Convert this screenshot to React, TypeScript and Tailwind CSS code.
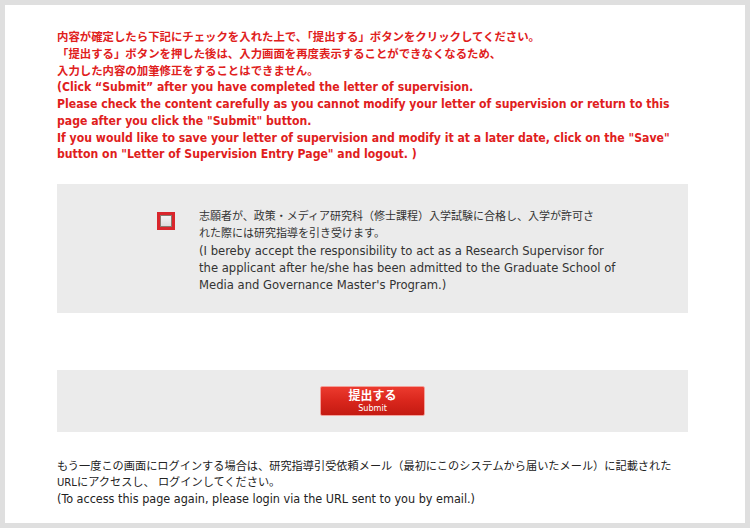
import React from "react";

const ff = '"DejaVu Sans Condensed", "Noto Sans CJK JP", sans-serif';

export default function App() {
  return (
    <div className="min-h-[528px] w-[750px] bg-[#dfdfdf] p-[5px]" style={{ fontFamily: ff }}>
      <div className="h-[518px] w-[740px] bg-white pl-[52px] pr-[40px] pt-[24px]">
        <div className="text-[12.15px] font-bold leading-[16.75px] text-[#e0201c]">
          <div className="text-[11.4px]">内容が確定したら下記にチェックを入れた上で、「提出する」ボタンをクリックしてください。</div>
          <div className="text-[11.4px]">「提出する」ボタンを押した後は、入力画面を再度表示することができなくなるため、</div>
          <div className="text-[11.4px]">入力した内容の加筆修正をすることはできません。</div>
          <div>(Click “Submit” after you have completed the letter of supervision.</div>
          <div>Please check the content carefully as you cannot modify your letter of supervision or return to this</div>
          <div>page after you click the "Submit" button.</div>
          <div>If you would like to save your letter of supervision and modify it at a later date, click on the "Save"</div>
          <div>button on "Letter of Supervision Entry Page" and logout. )</div>
        </div>

        <div className="mt-[21px] flex h-[129px] w-[631px] bg-[#ebebeb] pl-[100px] pt-[24px]">
          <div className="mt-[4px] flex h-[18px] w-[18px] shrink-0 items-center justify-center bg-[#d9262c]">
            <div className="h-[12px] w-[12px] border border-[#8a7a70] bg-gradient-to-b from-[#f4f4f4] to-[#dcdcdc]" />
          </div>
          <div className="ml-[24px] whitespace-nowrap text-[12.9px] leading-[17px] text-[#333]">
            <div className="text-[11px]">志願者が、政策・メディア研究科（修士課程）入学試験に合格し、入学が許可さ</div>
            <div className="text-[11px]">れた際には研究指導を引き受けます。</div>
            <div>(I bereby accept the responsibility to act as a Research Supervisor for</div>
            <div>the applicant after he/she has been admitted to the Graduate School of</div>
            <div>Media and Governance Master's Program.)</div>
          </div>
        </div>

        <div className="mt-[57px] flex h-[62px] w-[631px] items-center justify-center bg-[#ebebeb]">
          <button className="flex h-[30px] w-[105px] flex-col items-center justify-center rounded-[2px] border border-[#f3a09a] bg-gradient-to-b from-[#ec3a2e] via-[#d9261c] to-[#c41a12] text-white">
            <span className="text-[12px] font-bold leading-[14px]">提出する</span>
            <span className="text-[9px] leading-[10px]">Submit</span>
          </button>
        </div>

        <div className="mt-[27px] whitespace-nowrap text-[12.5px] leading-[16px] text-[#222]">
          <div className="text-[11.2px]">もう一度この画面にログインする場合は、研究指導引受依頼メール（最初にこのシステムから届いたメール）に記載された</div>
          <div className="text-[11.2px]">URLにアクセスし、 ログインしてください。</div>
          <div>(To access this page again, please login via the URL sent to you by email.)</div>
        </div>
      </div>
    </div>
  );
}
